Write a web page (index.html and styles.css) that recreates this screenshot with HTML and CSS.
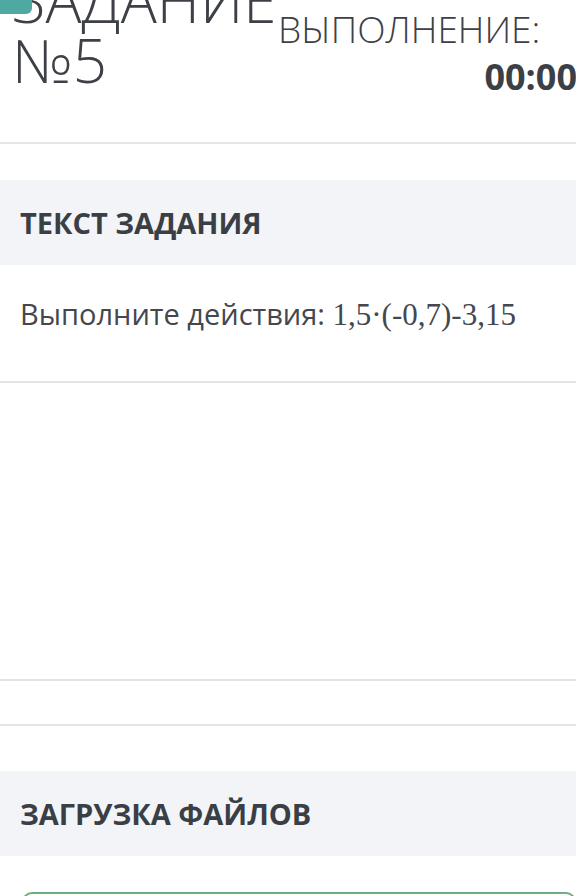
FILE: index.html
```html
<!DOCTYPE html>
<html lang="ru">
<head>
<meta charset="utf-8">
<title>Задание №5</title>
<link rel="stylesheet" href="styles.css">
</head>
<body>
<div class="page">
  <div class="badge"></div>
  <header class="task-head">
    <h1 class="task-title">ЗАДАНИЕ<br>№5</h1>
    <div class="timer">
      <div class="timer-label">ВЫПОЛНЕНИЕ:</div>
      <div class="timer-value">00:00</div>
    </div>
  </header>

  <section class="block">
    <h2 class="block-title">ТЕКСТ ЗАДАНИЯ</h2>
    <div class="task-text">Выполните действия: <span class="math">1,5·(-0,7)-3,15</span></div>
  </section>

  <div class="answer-area"></div>
  <div class="spacer-row"></div>

  <section class="block upload">
    <h2 class="block-title">ЗАГРУЗКА ФАЙЛОВ</h2>
    <div class="upload-box"></div>
  </section>
</div>
</body>
</html>
```

FILE: styles.css
```css
html, body {
  margin: 0;
  padding: 0;
  background: #ffffff;
}

body {
  font-family: "Open Sans", "Noto Sans", sans-serif;
  color: #3b3f46;
  overflow: hidden;
}

.page {
  position: relative;
  width: 576px;
  height: 896px;
  overflow: hidden;
}

.badge {
  position: absolute;
  left: 0;
  top: 0;
  width: 32px;
  height: 14px;
  background: #4ea9a2;
  border-bottom-right-radius: 6px;
  z-index: 2;
}

.task-head {
  display: flex;
  justify-content: space-between;
  align-items: flex-start;
  height: 142px;
  border-bottom: 2px solid #e6e6e6;
  box-sizing: content-box;
}

.task-title {
  margin: -30px 0 0 12px;
  font-weight: 350;
  font-size: 60px;
  line-height: 60px;
  color: #3d4047;
  white-space: nowrap;
}

.timer {
  flex: 0 0 298px;
  width: 298px;
  margin-top: 3px;
}

.timer-label {
  font-weight: 350;
  font-size: 37px;
  line-height: 52px;
  color: #3d4047;
  white-space: nowrap;
}

.timer-value {
  font-weight: 700;
  font-size: 36px;
  line-height: 40px;
  text-align: right;
  margin-top: 2px;
  margin-right: -1px;
  color: #3b3f46;
}

.block {
  margin-top: 36px;
}

.block-title {
  margin: 0;
  height: 85px;
  display: flex;
  align-items: center;
  padding-left: 20px;
  background: #f2f4f7;
  font-weight: 700;
  font-size: 29px;
  color: #3a3e45;
}

.task-text {
  height: 118px;
  padding: 29px 20px 0;
  box-sizing: border-box;
  border-bottom: 2px solid #e4e4e4;
  font-size: 29px;
  line-height: 40px;
  color: #44474d;
}

.math {
  font-family: "Liberation Serif", "DejaVu Serif", serif;
  font-size: 31px;
}

.answer-area {
  height: 296px;
  border-bottom: 2px solid #e4e4e4;
}

.spacer-row {
  height: 43px;
  border-bottom: 2px solid #e4e4e4;
}

.upload {
  margin-top: 45px;
}

.upload-box {
  margin: 36px 0 0 22px;
  height: 60px;
  border: 2px solid #6fae7f;
  border-radius: 10px;
}
```
